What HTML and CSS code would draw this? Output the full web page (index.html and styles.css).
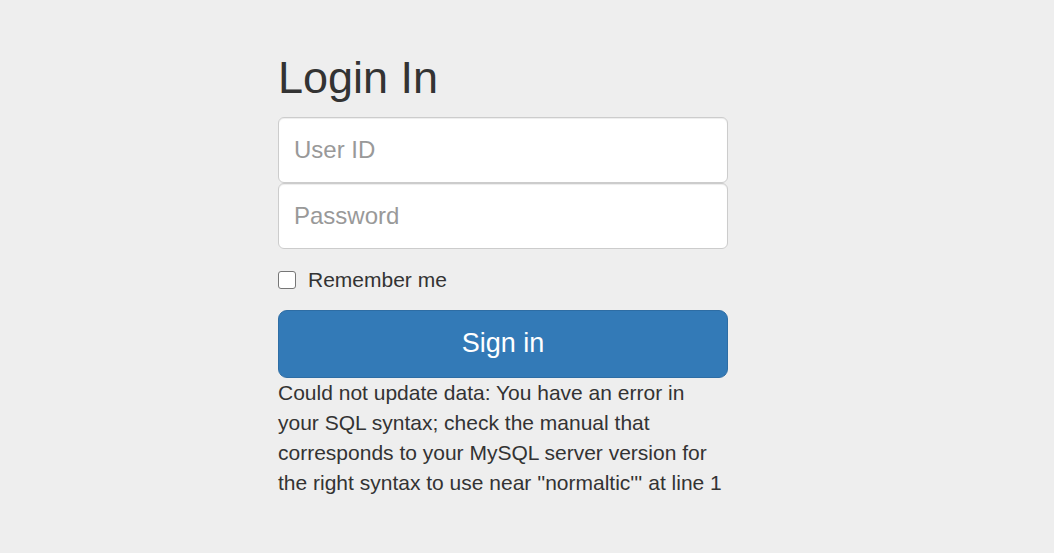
FILE: index.html
```html
<!DOCTYPE html>
<html>
<head>
<meta charset="utf-8">
<link rel="stylesheet" href="styles.css">
</head>
<body>
<div class="container">
  <form class="form-signin">
    <h2 class="heading">Login In</h2>
    <input type="text" class="field field-top" placeholder="User ID">
    <input type="password" class="field field-bottom" placeholder="Password">
    <div class="checkbox">
      <label><input type="checkbox" class="check"> Remember me</label>
    </div>
    <button type="button" class="btn">Sign in</button>
    <p class="error">Could not update data: You have an error in your SQL syntax; check the manual that corresponds to your MySQL server version for the right syntax to use near ''normaltic''' at line 1</p>
  </form>
</div>
</body>
</html>
```

FILE: styles.css
```css
html, body {
  margin: 0;
  padding: 0;
}
body {
  background: #eeeeee;
  font-family: "Liberation Sans", Arial, sans-serif;
  font-size: 21px;
  line-height: 30px;
  color: #333333;
}
.container {
  padding-left: 278px;
}
.form-signin {
  width: 450px;
  padding-top: 23px;
}
.heading {
  margin: 30px 0 14px 0;
  font-size: 45px;
  font-weight: 500;
  line-height: 49.5px;
  color: #333333;
}
.field {
  display: block;
  box-sizing: border-box;
  width: 100%;
  height: 66px;
  padding: 15px;
  font-family: "Liberation Sans", Arial, sans-serif;
  font-size: 24px;
  color: #555555;
  background: #ffffff;
  border: 1px solid #cccccc;
  border-radius: 6px;
  box-shadow: inset 0 1px 1px rgba(0,0,0,0.075);
  outline: none;
}
.field::placeholder {
  color: #999999;
}
.field-top {
  margin-bottom: 0;
}
.field-bottom {
  margin-top: 0;
  margin-bottom: 16px;
}
.checkbox {
  margin: 0 0 15px 0;
}
.checkbox label {
  display: flex;
  align-items: center;
  gap: 12px;
  font-weight: 400;
}
.check {
  appearance: none;
  -webkit-appearance: none;
  box-sizing: border-box;
  width: 18px;
  height: 18px;
  margin: 0;
  border: 1.5px solid #767676;
  border-radius: 3px;
  background: #ffffff;
}
.btn {
  display: block;
  box-sizing: border-box;
  width: 100%;
  height: 68px;
  padding: 0;
  font-family: "Liberation Sans", Arial, sans-serif;
  font-size: 27px;
  color: #ffffff;
  background: #337ab7;
  border: 1px solid #2e6da4;
  border-radius: 9px;
}
.error {
  margin: 0;
}
```
